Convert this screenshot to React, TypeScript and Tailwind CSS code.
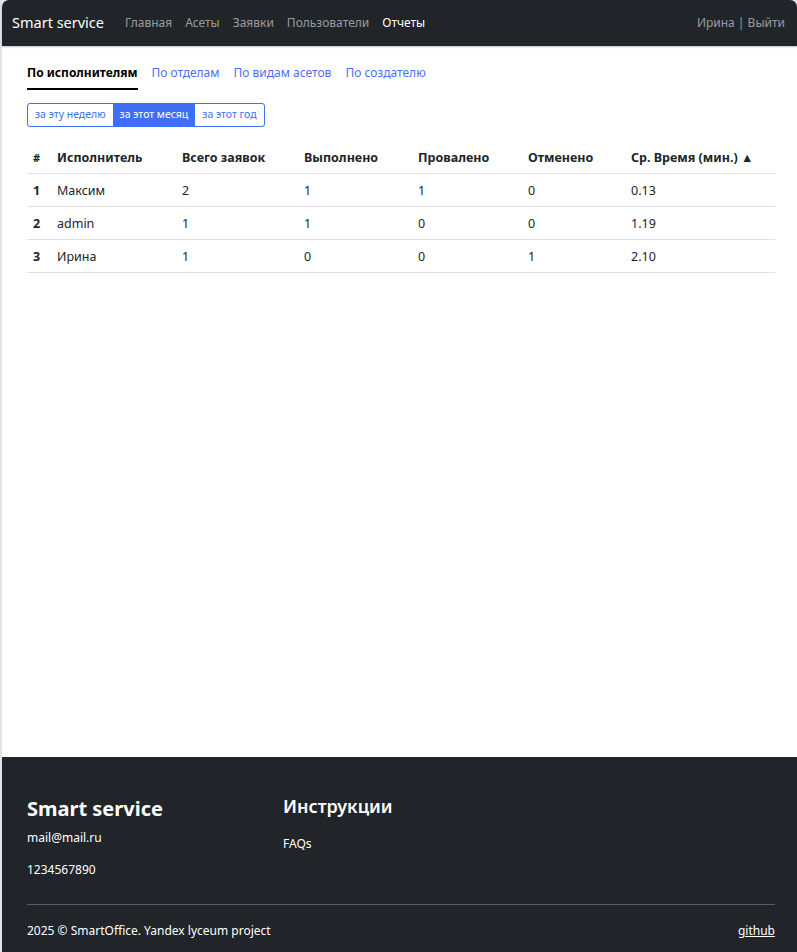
import React from 'react';

const navLinks = ['Главная', 'Асеты', 'Заявки', 'Пользователи'];

const rows = [
  { n: 1, name: 'Максим', total: 2, done: 1, failed: 1, canceled: 0, avg: '0.13' },
  { n: 2, name: 'admin', total: 1, done: 1, failed: 0, canceled: 0, avg: '1.19' },
  { n: 3, name: 'Ирина', total: 1, done: 0, failed: 0, canceled: 1, avg: '2.10' },
];

const Navbar: React.FC = () => (
  <nav className="flex h-[46px] items-center justify-between rounded-t-[7px] bg-[#212529] pl-[10px] pr-[12px] shadow-[0_1px_2px_rgba(0,0,0,0.25)]">
    <div className="flex items-center">
      <span className="mr-[21px] text-[14.5px] text-white">Smart service</span>
      <div className="flex gap-[13px] text-[12px] text-[#ffffff8c]">
        {navLinks.map((l) => (
          <a key={l}>{l}</a>
        ))}
        <a className="text-white">Отчеты</a>
      </div>
    </div>
    <div className="text-[12px] text-[#ffffff8c]">Ирина | Выйти</div>
  </nav>
);

const App: React.FC = () => {
  return (
    <div
      className="flex min-h-screen bg-[#dde4ec] pl-[2px]"
      style={{ fontFamily: '"Noto Sans", "Open Sans", sans-serif' }}
    >
      <div className="flex min-h-screen flex-1 flex-col rounded-t-[7px] bg-white">
        <Navbar />

        <main className="flex-1 pl-[25px] pr-[22px] pt-[14px] text-[#212529]">
          <div className="flex gap-[14px] text-[12px] leading-[18px]">
            <a className="border-b-2 border-black pb-[6px] pt-[4px] font-bold text-black">По исполнителям</a>
            <a className="pt-[4px] text-[#4d6ff6]">По отделам</a>
            <a className="pt-[4px] text-[#4d6ff6]">По видам асетов</a>
            <a className="pt-[4px] text-[#4d6ff6]">По создателю</a>
          </div>

          <div className="mt-[13px] inline-flex h-[24px] overflow-hidden rounded-[3px] border border-[#3e6ff4] text-[10.5px]">
            <button className="px-[7px] text-[#3e6ff4]">за эту неделю</button>
            <button className="bg-[#3e6ff4] px-[7px] text-white">за этот месяц</button>
            <button className="px-[7px] text-[#3e6ff4]">за этот год</button>
          </div>

          <table className="mt-[13px] w-full border-collapse text-left text-[12.5px]">
            <thead>
              <tr className="h-[33px] border-b border-[#dee2e6] font-bold">
                <th className="w-[24px] pl-[6px] pt-[4px] text-[11px]">#</th>
                <th className="w-[125px] pl-[6px] pt-[4px]">Исполнитель</th>
                <th className="w-[122px] pl-[6px] pt-[4px]">Всего заявок</th>
                <th className="w-[114px] pl-[6px] pt-[4px]">Выполнено</th>
                <th className="w-[110px] pl-[6px] pt-[4px]">Провалено</th>
                <th className="w-[103px] pl-[6px] pt-[4px]">Отменено</th>
                <th className="pl-[6px] pt-[4px]">Ср. Время (мин.) ▲</th>
              </tr>
            </thead>
            <tbody>
              {rows.map((r) => (
                <tr key={r.n} className="h-[33px] border-b border-[#dee2e6]">
                  <td className="pl-[6px] pt-[4px] font-bold">{r.n}</td>
                  <td className="pl-[6px] pt-[4px]">{r.name}</td>
                  <td className="pl-[6px] pt-[4px]">{r.total}</td>
                  <td className="pl-[6px] pt-[4px]">{r.done}</td>
                  <td className="pl-[6px] pt-[4px]">{r.failed}</td>
                  <td className="pl-[6px] pt-[4px]">{r.canceled}</td>
                  <td className="pl-[6px] pt-[4px]">{r.avg}</td>
                </tr>
              ))}
            </tbody>
          </table>
        </main>

        <footer className="h-[195px] bg-[#212529] pl-[25px] pr-[22px] pt-[38px] text-white">
          <div className="flex">
            <div className="w-[256px]">
              <div className="text-[20px] font-bold leading-[28px]">Smart service</div>
              <div className="mt-[6px] text-[12px]">mail@mail.ru</div>
              <div className="mt-[14px] text-[12px]">1234567890</div>
            </div>
            <div>
              <div className="-mt-[2px] text-[18px] font-semibold leading-[26px]">Инструкции</div>
              <div className="mt-[16px] text-[12px]">FAQs</div>
            </div>
          </div>
          <div className="mt-[25px] border-t border-[#5a5e63]" />
          <div className="flex justify-between pt-[17px] text-[12px]">
            <span>2025 © SmartOffice. Yandex lyceum project</span>
            <a className="underline">github</a>
          </div>
        </footer>
      </div>
    </div>
  );
};

export default App;
